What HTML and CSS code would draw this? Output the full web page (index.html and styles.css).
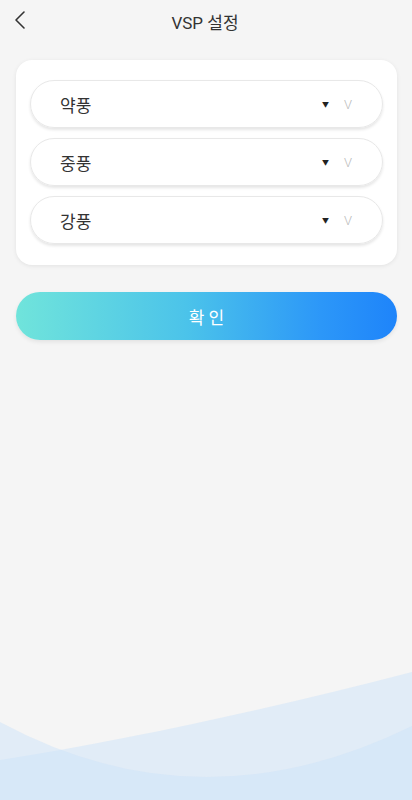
FILE: index.html
```html
<!DOCTYPE html>
<html lang="ko">

<head>
    <meta charset="UTF-8">
    <meta name="viewport" content="width=device-width, initial-scale=1.0">
    <title>VSP 설정</title>
    <link rel="stylesheet" href="styles.css">
</head>

<body>
    <div class="page">
        <header class="top-bar">
            <a class="back" href="#">
                <svg width="12" height="20" viewBox="0 0 12 20">
                    <path d="M10 2 L2 10 L10 18" fill="none" stroke="#333" stroke-width="1.6" stroke-linecap="round" stroke-linejoin="round" />
                </svg>
            </a>
            <h1>VSP 설정</h1>
        </header>

        <div class="card">
            <div class="pill">
                <span class="label">약풍</span>
                <span class="caret">&#9660;</span>
                <span class="vee">V</span>
            </div>
            <div class="pill">
                <span class="label">중풍</span>
                <span class="caret">&#9660;</span>
                <span class="vee">V</span>
            </div>
            <div class="pill">
                <span class="label">강풍</span>
                <span class="caret">&#9660;</span>
                <span class="vee">V</span>
            </div>
        </div>

        <button type="button" class="confirm">확 인</button>

        <!-- bottom wave decoration -->
        <svg class="waves" width="412" height="140" viewBox="0 0 412 140" preserveAspectRatio="none">
            <path d="M0 100 C 140 78, 280 46, 412 12 L412 140 L0 140 Z" fill="rgb(205,228,250)" fill-opacity="0.5" />
            <path d="M0 62 Q 200 170 412 66 L412 140 L0 140 Z" fill="rgb(205,228,250)" fill-opacity="0.5" />
        </svg>
    </div>
</body>

</html>
```

FILE: styles.css
```css
/* VSP settings screen */

body {
    font-family: Roboto, "Noto Sans CJK KR", sans-serif;
    margin: 0;
    padding: 0;
    background-color: #f5f5f5;
}

.page {
    width: 412px;
    height: 800px;
    display: flex;
    flex-direction: column;
    overflow: hidden;
}

.top-bar {
    height: 42px;
    display: flex;
    align-items: center;
    justify-content: center;
    position: relative;
}

.back {
    position: absolute;
    left: 14px;
    top: 10px;
    display: flex;
}

.top-bar h1 {
    margin: 0 0 0 -2px;
    font-size: 17px;
    font-weight: normal;
    color: #333;
}

.card {
    margin: 18px 15px 0 16px;
    padding: 20px 14px 21px;
    background: #fff;
    border-radius: 16px;
    box-shadow: 0 1px 4px rgba(0, 0, 0, 0.08);
    display: flex;
    flex-direction: column;
    gap: 10px;
}

.pill {
    height: 46px;
    border: 1px solid #e8e8e8;
    border-radius: 24px;
    box-shadow: 0 2px 3px rgba(0, 0, 0, 0.1);
    display: flex;
    align-items: center;
    padding: 0 30px 0 29px;
}

.label {
    flex: 1;
    font-size: 17px;
    color: #333;
}

.caret {
    font-size: 7px;
    color: #222;
    margin-right: 15px;
}

.vee {
    font-size: 13px;
    font-weight: 300;
    color: #bbb;
}

.confirm {
    margin: 27px 15px 0 16px;
    height: 48px;
    border: none;
    border-radius: 24px;
    background: linear-gradient(to right, #70e4db, #4bc3ea 45%, #2c97f8 80%, #1e84fa);
    box-shadow: 0 2px 4px rgba(0, 0, 0, 0.08);
    color: #fff;
    font-family: inherit;
    font-size: 17px;
    cursor: pointer;
}

.waves {
    margin-top: auto;
    display: block;
}
```
